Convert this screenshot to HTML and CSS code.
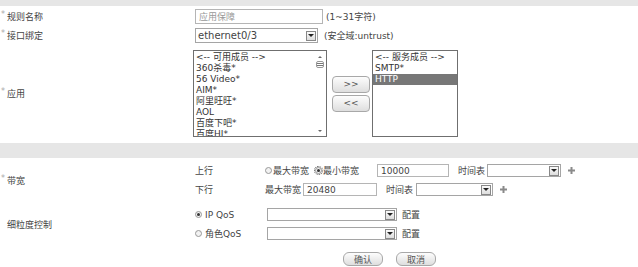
FILE: index.html
```html
<!DOCTYPE html>
<html lang="zh-CN">
<head>
<meta charset="UTF-8">
<title>应用保障</title>
<link rel="stylesheet" href="styles.css">
</head>
<body>

<div class="band top"></div>

<div class="row name-row">
  <div class="label"><i>*</i>规则名称</div>
  <div class="field">
    <input class="text-input name-input" type="text" value="应用保障">
    <span class="hint">(1~31字符)</span>
  </div>
</div>

<div class="row iface-row">
  <div class="label"><i>*</i>接口绑定</div>
  <div class="field">
    <div class="combo iface"><span class="val">ethernet0/3</span><span class="arrow"></span></div>
    <span class="hint tight">(安全域:untrust)</span>
  </div>
</div>

<div class="row app-row">
  <div class="label"><i>*</i>应用</div>
  <div class="field">
    <div class="listbox avail">
      <ul>
        <li>&lt;-- 可用成员 --&gt;</li>
        <li>360杀毒*</li>
        <li>56 Video*</li>
        <li>AIM*</li>
        <li>阿里旺旺*</li>
        <li>AOL</li>
        <li>百度下吧*</li>
        <li>百度HI*</li>
      </ul>
      <div class="scroll">
        <span class="up"></span>
        <span class="grip"></span>
        <span class="down"></span>
      </div>
    </div>
    <div class="movers">
      <button class="btn mover">&gt;&gt;</button>
      <button class="btn mover">&lt;&lt;</button>
    </div>
    <div class="listbox chosen">
      <ul>
        <li>&lt;-- 服务成员 --&gt;</li>
        <li>SMTP*</li>
        <li class="selected">HTTP</li>
      </ul>
    </div>
  </div>
</div>

<div class="band mid"></div>

<div class="row bw-row">
  <div class="label"><i>*</i>带宽</div>
  <div class="field sub">
    <div class="subrow">
      <span class="dir">上行</span>
      <span class="radio"></span><span class="opt">最大带宽</span>
      <span class="radio on focus"></span><span class="opt">最小带宽</span>
      <input class="text-input bw-up" type="text" value="10000">
      <span class="sched">时间表</span>
      <div class="combo sched-up"><span class="val"></span><span class="arrow"></span></div>
      <svg class="plus" width="7" height="7" viewBox="0 0 7 7"><rect x="2.5" y="0" width="2" height="7"/><rect x="0" y="2.5" width="7" height="2"/></svg>
    </div>
    <div class="subrow">
      <span class="dir">下行</span>
      <span class="opt">最大带宽</span>
      <input class="text-input bw-down" type="text" value="20480">
      <span class="sched">时间表</span>
      <div class="combo sched-down"><span class="val"></span><span class="arrow"></span></div>
      <svg class="plus" width="7" height="7" viewBox="0 0 7 7"><rect x="2.5" y="0" width="2" height="7"/><rect x="0" y="2.5" width="7" height="2"/></svg>
    </div>
  </div>
</div>

<div class="row qos-row">
  <div class="label plain">细粒度控制</div>
  <div class="field sub">
    <div class="subrow">
      <span class="radio on"></span><span class="qos-name">IP QoS</span>
      <div class="combo qos"><span class="val"></span><span class="arrow"></span></div>
      <span class="cfg">配置</span>
    </div>
    <div class="subrow">
      <span class="radio"></span><span class="qos-name">角色QoS</span>
      <div class="combo qos"><span class="val"></span><span class="arrow"></span></div>
      <span class="cfg">配置</span>
    </div>
  </div>
</div>

<div class="actions">
  <button class="btn pill">确认</button>
  <button class="btn pill">取消</button>
</div>

</body>
</html>
```

FILE: styles.css
```css
* { margin: 0; padding: 0; box-sizing: border-box; }

body {
  font-family: "DejaVu Sans", "Noto Sans CJK SC", sans-serif;
  font-size: 9px;
  color: #444;
  background: #fff;
  width: 638px;
  height: 267px;
  overflow: hidden;
}

.band { background: #e6e6e6; }
.band.top { height: 6px; }
.band.mid { height: 15px; margin-top: 6px; }

.row { display: flex; }
.label {
  width: 193px;
  flex-shrink: 0;
  display: flex;
  align-items: center;
  padding-left: 1px;
}
.label i {
  font-style: normal;
  color: #aaa;
  font-size: 8px;
  align-self: center;
  margin-top: -4px;
  margin-right: 2px;
}
.label.plain { padding-left: 7px; }

.field { display: flex; align-items: center; }

.name-row { height: 15px; margin-top: 3px; }
.iface-row { height: 15px; margin-top: 4px; }
.app-row { height: 87px; margin-top: 7px; }

.text-input {
  height: 15px;
  border: 1px solid #b5b5b5;
  font: inherit;
  color: #444;
  padding: 0 3px;
  outline: none;
}
.name-input { width: 128px; margin-left: 2px; color: #999; }

.hint { margin-left: 3px; }
.hint.tight { margin-left: 6px; }

.combo {
  display: flex;
  align-items: center;
  height: 15px;
  border: 1px solid #a5a5a5;
  background: #fff;
}
.combo .val { flex: 1; padding-left: 2px; white-space: nowrap; }
.combo .arrow {
  width: 10px;
  height: 10px;
  margin-right: 1px;
  border: 1px solid #888;
  background: linear-gradient(#fafafa, #ddd);
  display: flex;
  align-items: center;
  justify-content: center;
}
.combo .arrow::after {
  content: "";
  border-left: 3px solid transparent;
  border-right: 3px solid transparent;
  border-top: 3px solid #222;
}
.combo.iface { width: 123px; margin-left: 2px; font-size: 10px; }

.listbox {
  height: 87px;
  border: 1px solid #6f6f6f;
  display: flex;
  overflow: hidden;
  background: #fff;
}
.listbox ul { list-style: none; flex: 1; padding-top: 1px; }
.listbox li {
  line-height: 11px;
  height: 11px;
  padding-left: 2px;
  white-space: nowrap;
  color: #333;
}
.listbox li.selected { background: #777; color: #fff; }
.listbox.avail { width: 134px; }
.listbox.chosen { width: 86px; }

.scroll {
  width: 12px;
  display: flex;
  flex-direction: column;
  align-items: center;
  padding: 5px 0 4px;
}
.scroll .up, .scroll .down {
  width: 0; height: 0;
  border-left: 2px solid transparent;
  border-right: 2px solid transparent;
}
.scroll .up { border-bottom: 2px solid #666; }
.scroll .down { border-top: 2px solid #666; margin-top: auto; }
.scroll .grip {
  margin-top: 3px;
  width: 8px;
  height: 7px;
  border: 1px solid #999;
  border-radius: 2px;
  background: repeating-linear-gradient(#fff 0 1px, #777 1px 2px);
}

.movers {
  display: flex;
  flex-direction: column;
  gap: 2px;
  margin: 0 2px 0 5px;
}

.btn {
  font: inherit;
  color: #555;
  border: 1px solid #a8a8a8;
  background: linear-gradient(#fdfdfd, #dedede);
  cursor: pointer;
}
.btn.mover { width: 38px; height: 17px; border-radius: 4px; }

.bw-row { margin-top: 6px; }
.qos-row { margin-top: 12px; }

.field.sub { flex-direction: column; align-items: flex-start; gap: 6px; padding-left: 2px; }
.subrow { display: flex; align-items: center; height: 13px; white-space: nowrap; }

.dir { width: 70px; }

.radio {
  width: 7px;
  height: 7px;
  border-radius: 50%;
  border: 1px solid #999;
  background: #f2f2f2;
  display: inline-flex;
  align-items: center;
  justify-content: center;
  margin-right: 1px;
}
.radio.on::after {
  content: "";
  width: 3px;
  height: 3px;
  border-radius: 50%;
  background: #333;
}
.radio.focus { outline: 1px dotted #555; outline-offset: 0; margin-left: 6px; }

.bw-up { width: 72px; height: 13px; margin-left: 18px; }
.bw-down { width: 74px; height: 13px; margin-left: 2px; }
.sched { margin-left: 9px; margin-right: 2px; }
.combo.sched-up { width: 74px; height: 13px; }
.combo.sched-down { width: 77px; height: 13px; margin-left: 1px; }

.plus { fill: #8a8a8a; margin-left: 7px; }

.qos-name { width: 62px; margin-left: 2px; }
.combo.qos { width: 130px; height: 13px; }
.cfg { margin-left: 5px; }

.actions {
  display: flex;
  gap: 13px;
  padding-left: 343px;
  margin-top: 12px;
}
.btn.pill { width: 40px; height: 14px; border-radius: 6px; }
```
